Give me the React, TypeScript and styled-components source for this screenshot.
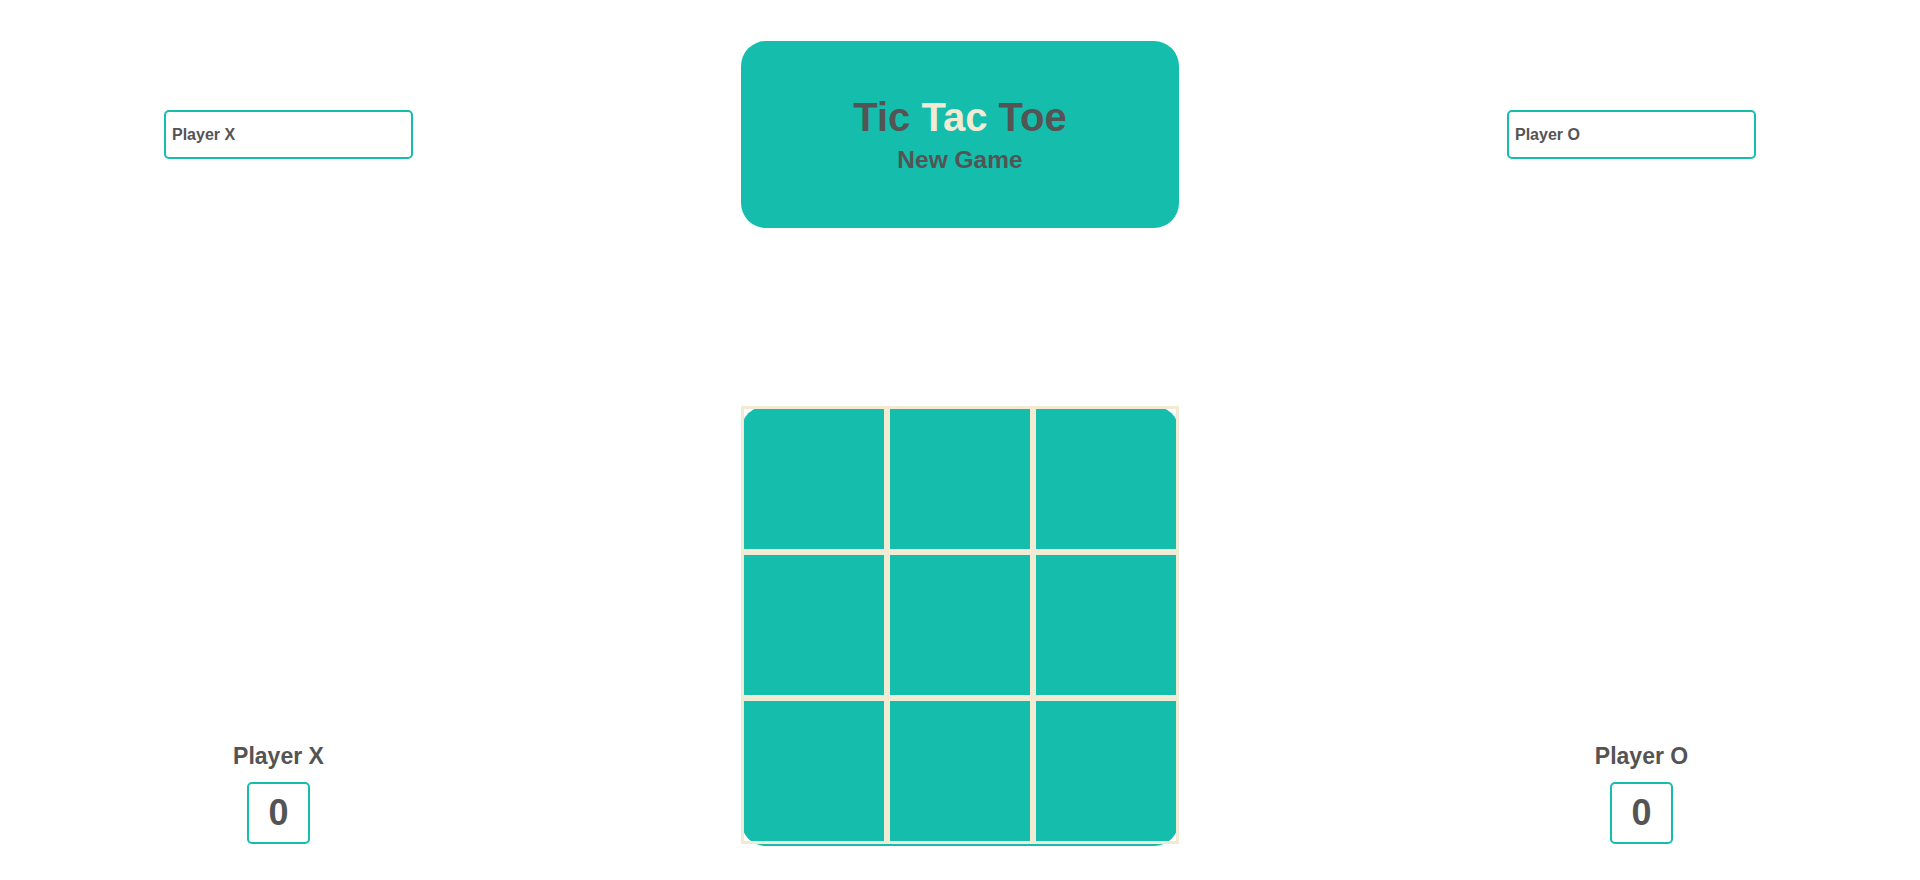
import React from "react";
import styled, { createGlobalStyle } from "styled-components";

const TEAL = "#14bdac";
const DARK = "#545454";
const BEIGE = "#f2ebd3";

const GlobalStyle = createGlobalStyle`
  html, body {
    margin: 0;
    padding: 0;
    background: #ffffff;
  }
  body {
    font-family: "Liberation Sans", Arial, Helvetica, sans-serif;
    color: ${DARK};
  }
  * { box-sizing: border-box; }
`;

const Page = styled.div`
  display: flex;
  flex-direction: column;
  padding-top: 41px;
  width: 1920px;
`;

const TopRow = styled.div`
  display: flex;
  justify-content: space-between;
  align-items: center;
  padding: 0 164px;
`;

const PlayerInput = styled.input`
  width: 249px;
  height: 49px;
  border: 2px solid ${TEAL};
  border-radius: 5px;
  padding: 0 6px;
  font-family: "Liberation Sans", Arial, sans-serif;
  font-weight: 700;
  font-size: 16px;
  color: ${DARK};
  background: #fff;
  outline: none;
`;

const Header = styled.div`
  width: 438px;
  height: 187px;
  background: ${TEAL};
  border-radius: 25px;
  display: flex;
  flex-direction: column;
  align-items: center;
  justify-content: center;
`;

const Title = styled.h1`
  margin: 0 0 7px;
  font-size: 40px;
  line-height: 44px;
  font-weight: 700;
  color: ${DARK};
`;

const Accent = styled.span`
  color: ${BEIGE};
`;

const NewGame = styled.div`
  font-size: 24.5px;
  line-height: 28px;
  font-weight: 700;
  color: ${DARK};
  cursor: pointer;
`;

const BottomRow = styled.div`
  margin-top: 178px;
  display: flex;
  justify-content: space-between;
  align-items: flex-end;
  padding: 0 218px;
`;

const ScoreBlock = styled.div`
  width: 121px;
  display: flex;
  flex-direction: column;
  align-items: center;
  padding-bottom: 2px;
`;

const ScoreLabel = styled.div`
  font-size: 23px;
  line-height: 26px;
  font-weight: 700;
  color: ${DARK};
  margin-bottom: 13px;
  white-space: nowrap;
`;

const ScoreBox = styled.div`
  width: 63px;
  height: 62px;
  border: 2px solid ${TEAL};
  border-radius: 5px;
  display: flex;
  align-items: center;
  justify-content: center;
  font-size: 36px;
  font-weight: 700;
  color: ${DARK};
`;

const Board = styled.div`
  width: 438px;
  height: 440px;
  background: ${TEAL};
  border-radius: 25px;
  display: grid;
  grid-template-columns: repeat(3, 146px);
  grid-template-rows: repeat(3, 146px);
  align-content: start;
`;

const Cell = styled.div`
  width: 146px;
  height: 146px;
  border: 3px solid ${BEIGE};
  background: transparent;
`;

export default function App() {
  const cells = Array.from({ length: 9 }, (_, i) => i);
  return (
    <>
      <GlobalStyle />
      <Page>
        <TopRow>
          <PlayerInput defaultValue="Player X" />
          <Header>
            <Title>
              Tic <Accent>Tac</Accent> Toe
            </Title>
            <NewGame>New Game</NewGame>
          </Header>
          <PlayerInput defaultValue="Player O" />
        </TopRow>
        <BottomRow>
          <ScoreBlock>
            <ScoreLabel>Player X</ScoreLabel>
            <ScoreBox>0</ScoreBox>
          </ScoreBlock>
          <Board>
            {cells.map((i) => (
              <Cell key={i} />
            ))}
          </Board>
          <ScoreBlock>
            <ScoreLabel>Player O</ScoreLabel>
            <ScoreBox>0</ScoreBox>
          </ScoreBlock>
        </BottomRow>
      </Page>
    </>
  );
}
